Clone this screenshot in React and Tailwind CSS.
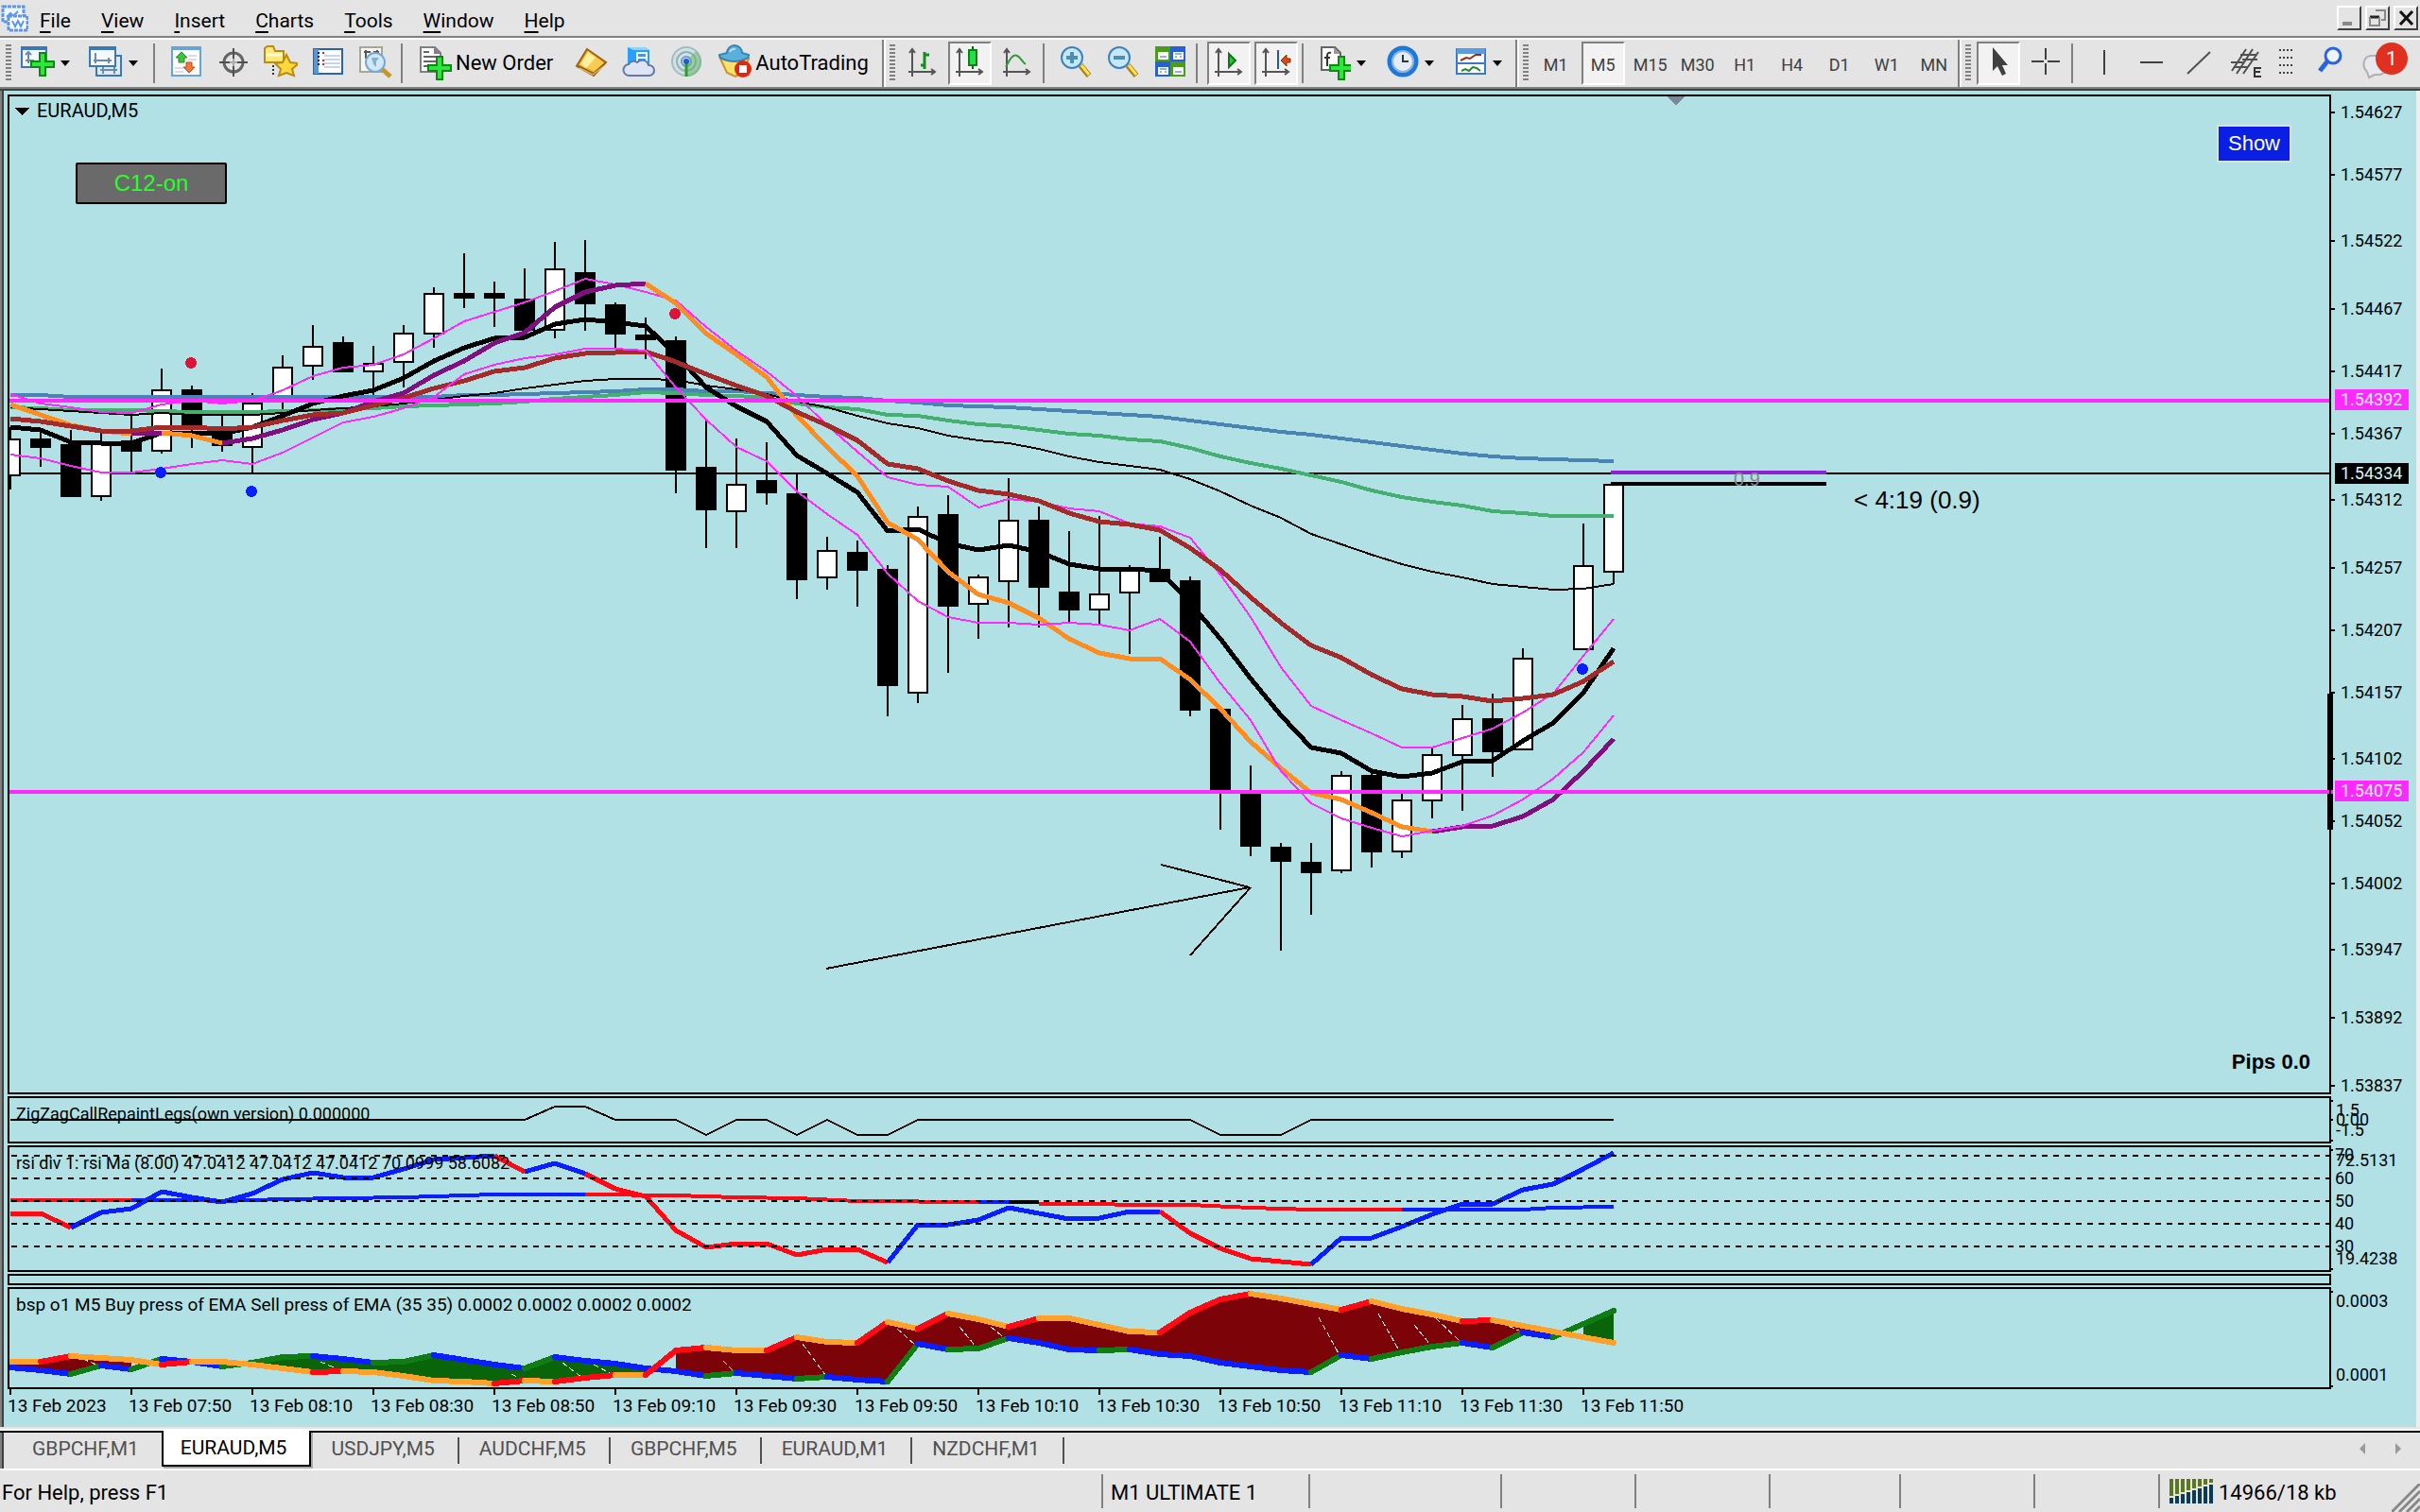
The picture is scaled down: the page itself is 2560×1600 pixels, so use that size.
const STEP = 32;
const FIRST_X = 11;
const barX = (i) => FIRST_X + i * STEP;

// [bar, high, bodyTop, bodyBottom, low, up]
const CANDLES = [
    [0, 452, 464, 504, 518, 1], [1, 455, 464, 474, 494, 0], [2, 455, 470, 526, 526, 0], [3, 457, 468, 526, 530, 1],
    [4, 438, 466, 478, 500, 0], [5, 390, 412, 478, 480, 1], [6, 408, 412, 452, 474, 0], [7, 438, 455, 472, 478, 0],
    [8, 416, 426, 474, 500, 1], [9, 376, 388, 424, 434, 1], [10, 344, 366, 388, 402, 1], [11, 356, 362, 394, 394, 0],
    [12, 366, 384, 394, 418, 1], [13, 344, 352, 384, 410, 1], [14, 304, 310, 354, 368, 1], [15, 268, 310, 316, 326, 0],
    [16, 298, 310, 316, 346, 0], [17, 284, 316, 350, 350, 0], [18, 256, 284, 350, 358, 1], [19, 254, 288, 322, 350, 0],
    [20, 320, 322, 354, 368, 0], [21, 336, 354, 360, 380, 0], [22, 356, 360, 498, 522, 0], [23, 444, 494, 540, 580, 0],
    [24, 464, 512, 542, 580, 1], [25, 468, 508, 522, 534, 0], [26, 502, 522, 614, 634, 0], [27, 568, 582, 612, 624, 1],
    [28, 572, 584, 604, 642, 0], [29, 598, 602, 726, 758, 0], [30, 536, 546, 734, 744, 1], [31, 524, 544, 642, 712, 0],
    [32, 608, 610, 640, 676, 1], [33, 506, 550, 616, 664, 1], [34, 536, 550, 622, 664, 0], [35, 562, 626, 646, 658, 0],
    [36, 546, 628, 646, 660, 1], [37, 598, 602, 628, 692, 1], [38, 568, 602, 616, 616, 0], [39, 610, 614, 752, 758, 0],
    [40, 750, 750, 838, 878, 0], [41, 810, 838, 896, 906, 0], [42, 892, 896, 912, 1006, 0], [43, 892, 912, 924, 968, 0],
    [44, 816, 820, 922, 924, 1], [45, 817, 820, 902, 918, 0], [46, 840, 846, 902, 908, 1], [47, 792, 798, 848, 866, 1],
    [48, 746, 760, 800, 858, 1], [49, 734, 760, 796, 822, 0], [50, 686, 696, 794, 794, 1], [52, 554, 598, 688, 688, 1],
    [53, 512, 512, 606, 618, 1],
];

const MA_BLUE = [
    418, 418, 420, 420, 420, 420, 420, 420, 420, 420, 420, 420, 420, 420, 420, 418, 418, 417, 416, 415,
    414, 412, 412, 414, 414, 416, 418, 420, 421, 424, 426, 429, 430, 431, 433, 435, 437, 439, 441, 445,
    449, 453, 457, 460, 464, 468, 472, 476, 480, 483, 485, 486, 487, 488,
];
const MA_GREEN = [
    431, 432, 434, 434, 434, 435, 436, 436, 436, 435, 434, 433, 432, 430, 429, 428, 427, 425, 422, 420,
    418, 415, 416, 418, 419, 421, 427, 431, 433, 439, 440, 445, 449, 451, 455, 459, 461, 465, 467, 474,
    483, 490, 496, 503, 510, 519, 526, 531, 535, 541, 543, 546, 546, 546,
];
const MA_SLOW = [
    431, 433, 435, 437, 439, 437, 439, 439, 439, 437, 434, 432, 430, 427, 423, 419, 416, 411, 407, 403,
    401, 401, 402, 408, 412, 417, 425, 431, 440, 448, 453, 461, 466, 469, 475, 483, 489, 493, 497, 507,
    520, 535, 548, 565, 576, 587, 597, 605, 611, 618, 621, 624, 623, 618,
];
const MA_BROWN = [
    443, 446, 451, 456, 456, 452, 452, 454, 452, 445, 439, 437, 429, 421, 411, 403, 393, 389, 379, 374,
    373, 372, 383, 396, 408, 419, 436, 450, 466, 491, 496, 509, 519, 523, 530, 543, 552, 555, 561, 580,
    603, 632, 659, 683, 696, 714, 729, 735, 737, 742, 739, 735, 721, 700,
];
const MA_FAST = [
    452, 455, 468, 469, 469, 458, 458, 459, 452, 440, 427, 419, 413, 400, 382, 368, 358, 357, 343, 338,
    341, 345, 375, 410, 430, 446, 482, 501, 521, 562, 560, 575, 582, 577, 584, 597, 602, 602, 604, 638,
    676, 718, 757, 791, 797, 816, 822, 818, 806, 805, 784, 765, 733, 686,
];
const BAND_UPPER = [
    417, 427, 431, 436, 437, 428, 424, 427, 424, 413, 398, 389, 386, 375, 358, 340, 330, 320, 308, 295,
    301, 309, 318, 346, 371, 393, 419, 450, 478, 505, 513, 515, 537, 528, 531, 538, 541, 554, 557, 569,
    608, 653, 706, 747, 762, 776, 791, 791, 781, 771, 754, 734, 694, 655,
];
const BAND_LOWER = [
    481, 485, 493, 500, 500, 496, 491, 487, 491, 479, 463, 447, 441, 432, 420, 396, 386, 379, 375, 369,
    369, 371, 410, 444, 473, 488, 520, 544, 566, 607, 636, 653, 659, 659, 661, 659, 661, 667, 655, 679,
    723, 762, 816, 850, 866, 876, 885, 879, 874, 863, 846, 824, 796, 757,
];

// supertrend: list of [colour, [[bar, y], ...]]
const TREND = [
    ['#ff8c1e', [[0, 428], [1, 439], [2, 450], [3, 456], [4, 459]]],
    ['#800f80', [[4, 459], [5, 458]]],
    ['#ff8c1e', [[5, 458], [6, 461], [7, 469]]],
    ['#800f80', [[7, 469], [8, 464], [9, 455], [10, 444], [11, 437], [12, 425], [13, 416], [14, 397], [15, 382], [16, 363], [17, 352], [18, 325], [19, 309], [20, 302], [21, 300]]],
    ['#ff8c1e', [[21, 300], [22, 321], [23, 353], [24, 375], [25, 399], [26, 440], [27, 473], [28, 504], [29, 553], [30, 571], [31, 605], [32, 629], [33, 638], [34, 654], [35, 676], [36, 691], [37, 697], [38, 697], [39, 719], [40, 750], [41, 785], [42, 813], [43, 839], [44, 846], [45, 860], [46, 875], [47, 880]]],
    ['#800f80', [[47, 880], [48, 875], [49, 874], [50, 864], [51, 846], [52, 816], [53, 782]]],
];

const ZIGZAG = [
    [0, 1185], [17, 1185], [18, 1171], [19, 1171], [20, 1185], [22, 1185], [23, 1201], [24, 1185], [25, 1185], [26, 1201],
    [27, 1185], [28, 1201], [29, 1201], [30, 1185], [39, 1185], [40, 1201], [42, 1201], [43, 1185], [53, 1185],
];

const RSI = [
    1284, 1284, 1299, 1283, 1279, 1261, 1267, 1272, 1263, 1248, 1241, 1246, 1246, 1237, 1227, 1225, 1223, 1240, 1231, 1242,
    1258, 1266, 1302, 1320, 1316, 1316, 1328, 1322, 1322, 1336, 1296, 1296, 1291, 1278, 1284, 1290, 1289, 1282, 1282, 1305,
    1321, 1332, 1335, 1338, 1310, 1310, 1298, 1285, 1274, 1274, 1259, 1253, 1237, 1220,
];
// [from, to, colour] in bars
const RSI_RUNS = [
    [0, 2, '#ff0a14'], [2, 16, '#0a1eff'], [16, 17, '#ff0a14'], [17, 19, '#0a1eff'], [19, 29, '#ff0a14'],
    [29, 38, '#0a1eff'], [38, 43, '#ff0a14'], [43, 53, '#0a1eff'],
];
const RSI_SLOW = [
    ['#ff0a14', [[0, 1270], [4, 1270]]],
    ['#0a1eff', [[4, 1270], [6, 1270]]],
    ['#ff0a14', [[6, 1270], [7, 1271]]],
    ['#0a1eff', [[7, 1271], [9, 1269], [13, 1267], [16, 1264], [19, 1264]]],
    ['#ff0a14', [[19, 1264], [22, 1265], [24, 1267], [26, 1268], [28, 1271], [32, 1272]]],
    ['#0a1eff', [[32, 1272], [33, 1272]]],
    ['#000000', [[33, 1272], [34, 1272]]],
    ['#ff0a14', [[34, 1274], [39, 1275], [41, 1278], [43, 1280], [46, 1280]]],
    ['#0a1eff', [[46, 1280], [50, 1280], [51, 1278], [53, 1277]]],
];
const RSI_LEVELS = [
    { y: 1223, label: '70', text: 1228 },
    { y: 1247, label: '60', text: 1253 },
    { y: 1271, label: '50', text: 1277 },
    { y: 1295, label: '40', text: 1301 },
    { y: 1319, label: '30', text: 1325 },
];

const SELL = [
    1441, 1441, 1435, 1437, 1439, 1444, 1441, 1441, 1444, 1448, 1452, 1451, 1452, 1456, 1461, 1462, 1464, 1461, 1462, 1458,
    1455, 1455, 1429, 1426, 1429, 1429, 1415, 1420, 1421, 1399, 1406, 1390, 1396, 1404, 1395, 1395, 1402, 1409, 1410, 1389,
    1375, 1369, 1374, 1380, 1386, 1377, 1385, 1391, 1398, 1397, 1403, 1409, 1415, 1421,
];
const BUY = [
    1447, 1450, 1454, 1445, 1449, 1438, 1441, 1446, 1442, 1436, 1435, 1438, 1442, 1441, 1434, 1439, 1444, 1448, 1436, 1440,
    1443, 1448, 1451, 1456, 1453, 1456, 1459, 1457, 1460, 1462, 1422, 1428, 1427, 1416, 1421, 1428, 1429, 1428, 1433, 1435,
    1442, 1446, 1450, 1452, 1434, 1438, 1431, 1425, 1421, 1426, 1410, 1415, 1401, 1387,
];
const HATCH = [
    [88, 1438, 104, 1445], [339, 1441, 360, 1450], [541, 1454, 551, 1459], [595, 1442, 615, 1457], [628, 1444, 647, 1454],
    [765, 1440, 777, 1452], [849, 1422, 873, 1455], [949, 1406, 968, 1423], [1015, 1404, 1033, 1426], [1048, 1404, 1064, 1417],
    [1395, 1394, 1417, 1434], [1458, 1390, 1480, 1429], [1496, 1402, 1514, 1424], [1519, 1395, 1546, 1421], [1588, 1400, 1609, 1409],
];

const PRICES = [
    ['1.54627', 119], ['1.54577', 185], ['1.54522', 255], ['1.54467', 327], ['1.54417', 393], ['1.54367', 459],
    ['1.54312', 529], ['1.54257', 601], ['1.54207', 667], ['1.54157', 733], ['1.54102', 803], ['1.54052', 869],
    ['1.54002', 935], ['1.53947', 1005], ['1.53892', 1077], ['1.53837', 1149],
];
const PRICE_TAGS = [
    ['1.54392', 423, '#ff28ff'], ['1.54334', 501, '#000000'], ['1.54075', 837, '#ff28ff'],
];
const TIMES = ['2023', '07:50', '08:10', '08:30', '08:50', '09:10', '09:30', '09:50', '10:10', '10:30', '10:50', '11:10', '11:30', '11:50'];

const MENUS = ['File', 'View', 'Insert', 'Charts', 'Tools', 'Window', 'Help'];
const TIMEFRAMES = ['M1', 'M5', 'M15', 'M30', 'H1', 'H4', 'D1', 'W1', 'MN'];
const TABS = ['GBPCHF,M1', 'EURAUD,M5', 'USDJPY,M5', 'AUDCHF,M5', 'GBPCHF,M5', 'EURAUD,M1', 'NZDCHF,M1'];

const toPoints = (ys) => ys.map((y, i) => `${barX(i)},${y}`).join(' ');
const pairPoints = (pairs) => pairs.map(([i, y]) => `${barX(i)},${y}`).join(' ');

const Line = ({ points, color, width }) => (
    <polyline points={points} fill="none" stroke={color} strokeWidth={width} strokeLinejoin="round" />
);

/* ---------- toolbar icons, all on a 36 x 40 box ---------- */

const Icon = ({ children }) => (
    <svg viewBox="0 0 36 40" className="w-9 h-10 shrink-0" fill="none" aria-hidden="true">{children}</svg>
);

const Plus = ({ x, y }) => (
    <path d={`M${x + 8} ${y}h6v9h9v6h-9v9h-6v-9h-9v-6h9z`} fill="#2fe63c" stroke="#0a8a14" strokeWidth="2" />
);

const NewChartIcon = () => (
    <Icon>
        <rect x="1" y="3" width="26" height="21" fill="#f4f8fc" stroke="#3a78b8" strokeWidth="2" />
        <rect x="1" y="2" width="26" height="4" fill="#3a78b8" />
        <path d="M8 8v12M5 11l3-3 3 3M5 17h9" stroke="#6a8cab" strokeWidth="2" />
        <Plus x={12} y={9} />
    </Icon>
);

const ProfilesIcon = () => (
    <Icon>
        <rect x="8" y="12" width="26" height="21" fill="#dfeaf5" stroke="#3a78b8" strokeWidth="2" />
        <path d="M12 27h18M15 23v8M27 23v8" stroke="#6a8cab" strokeWidth="2" />
        <rect x="1" y="3" width="27" height="20" fill="#f4f8fc" stroke="#3a78b8" strokeWidth="2" />
        <rect x="1" y="2" width="27" height="4" fill="#3a78b8" />
        <path d="M7 9v11M5 17h19M21 14v6" stroke="#6a8cab" strokeWidth="2" />
    </Icon>
);

const MarketWatchIcon = () => (
    <Icon>
        <rect x="3" y="3" width="30" height="30" fill="#fff" stroke="#68a4dc" strokeWidth="2" />
        <rect x="3" y="2" width="30" height="4" fill="#68a4dc" />
        <path d="M20 12h9M20 16h9M6 25h9M6 29h9" stroke="#ddd" strokeWidth="2" />
        <path d="M13 8l6 6h-3v5h-6v-5H7z" fill="#3cc43c" stroke="#1e8c1e" />
        <path d="M21 30l6-6h-3v-5h-6v5h-3z" fill="#f07840" stroke="#c04818" />
    </Icon>
);

const CrossCircleIcon = () => (
    <Icon>
        <circle cx="18" cy="19" r="10" stroke="#646464" strokeWidth="3" />
        <path d="M18 4v11M18 23v11M3 19h11M22 19h11" stroke="#505050" strokeWidth="2" />
        <path d="M14 19h8M18 15v8" stroke="#aaa" strokeWidth="2" />
    </Icon>
);

const NavigatorIcon = () => (
    <Icon>
        <path d="M10 22v12" stroke="#333" strokeWidth="2" strokeDasharray="2 2" />
        <path d="M1 4l3-2h6l2 5h9v12H1z" fill="#ffe878" stroke="#b88c14" strokeWidth="2" />
        <path d="M3 11h17" stroke="#fffbd0" strokeWidth="3" />
        <path d="M24 11l4 8 9 1-7 6 2 7-8-3-8 3 2-7-6-6 8-1z" fill="#ffd83c" stroke="#b88c14" strokeWidth="2" />
    </Icon>
);

const DataWindowIcon = () => (
    <Icon>
        <rect x="3" y="5" width="30" height="26" fill="#fff" stroke="#2864b4" strokeWidth="2" />
        <rect x="3" y="5" width="5" height="26" fill="#5a94d8" />
        <path d="M14 12h17M14 16h17M14 20h17M14 24h17" stroke="#c4d4f4" strokeWidth="2" />
        <path d="M8 8v16M13 8v2M13 20v2" stroke="#222" strokeWidth="2" strokeDasharray="2 2" />
        <path d="M13 8v2M13 16v2M13 20v2" stroke="#e01e1e" strokeWidth="2" />
    </Icon>
);

const TesterIcon = () => (
    <Icon>
        <rect x="2" y="3" width="23" height="26" fill="#f6f6f2" stroke="#aaa694" strokeWidth="2" />
        <path d="M8 6v9M6 8h7M20 6v9M16 8h6" stroke="#555" strokeWidth="2" />
        <path d="M25 26l9 8" stroke="#c89628" strokeWidth="5" />
        <circle cx="18" cy="19" r="10" fill="#cfe8fa" stroke="#78a8d4" strokeWidth="2" />
        <path d="M14 14h8l-3 4v6l-3-3z" fill="#8cb0cc" />
    </Icon>
);

const NewOrderIcon = () => (
    <Icon>
        <path d="M3 3h15l6 6v20H3z" fill="#fff" stroke="#808080" strokeWidth="2" />
        <path d="M17 3v7h7z" fill="#808080" />
        <path d="M6 8h6M6 13h14M6 18h14M6 23h10" stroke="#646464" strokeWidth="2" />
        <Plus x={12} y={13} />
    </Icon>
);

const BookIcon = () => (
    <Icon>
        <path d="M13 5l20 14-13 14-18-10z" fill="#f0b432" stroke="#a06414" strokeWidth="2" />
        <path d="M14 7l17 13-11 8-14-7z" fill="#f8cc50" />
        <path d="M14 8l8 6-10 11-6-4z" fill="#fff0a0" />
        <path d="M2 22l18 9 13-12" stroke="#a06414" strokeWidth="2" />
        <path d="M5 25l14 7 12-9" stroke="#e8d8a8" strokeWidth="1" />
    </Icon>
);

const CloudIcon = () => (
    <Icon>
        <path d="M6 3h18l5 3v17H6z" fill="#28a0fa" />
        <path d="M6 3h18l5 3h-17z" fill="#8cd4ff" />
        <path d="M16 9h10v10H16zM16 14h10" stroke="#fff" strokeWidth="2" />
        <path d="M8 33a6 6 0 0 1-1-12 6 6 0 0 1 9-2 7 7 0 0 1 12 3 5 5 0 0 1 1 11z" fill="#dde4f4" stroke="#6478a8" strokeWidth="2" />
    </Icon>
);

const SignalIcon = () => (
    <Icon>
        <circle cx="18" cy="18" r="15" fill="#d4e2dc" stroke="#a0bcc4" strokeWidth="2" />
        <circle cx="18" cy="18" r="10" stroke="#8cb0cc" strokeWidth="2" />
        <circle cx="18" cy="18" r="5" stroke="#6c98d8" strokeWidth="2" />
        <path d="M18 18L28 7a15 15 0 0 1-10 27z" fill="#64b464" fillOpacity="0.5" />
        <path d="M18 18v16" stroke="#28a028" strokeWidth="3" />
        <circle cx="18" cy="18" r="3" fill="#1e5ad2" />
    </Icon>
);

const RobotIcon = () => (
    <Icon>
        <path d="M3 15h30l-6 15-8 4-9-4z" fill="#ffe06c" stroke="#c89628" strokeWidth="2" />
        <path d="M10 9a8 8 0 0 1 16 0l7 2c1 4-8 7-15 7S1 15 2 11z" fill="#5ab0dc" stroke="#3884b4" strokeWidth="2" />
        <path d="M13 8a5 5 0 0 1 6-3" stroke="#b4e0f4" strokeWidth="2" />
        <circle cx="27" cy="26" r="9" fill="#dc2814" />
        <rect x="23" y="22" width="8" height="8" fill="#fff" />
    </Icon>
);

const Axes = () => (
    <path d="M7 6v28M3 29h27M4 9l3-4 3 4M27 26l4 3-4 3" stroke="#555" strokeWidth="2" />
);

const BarsIcon = () => (
    <Icon><Axes /><path d="M20 8v18M16 22h4M20 11h5" stroke="#148c1e" strokeWidth="3" /></Icon>
);
const CandlesIcon = () => (
    <Icon>
        <Axes />
        <path d="M21 2v24" stroke="#0a6414" strokeWidth="2" />
        <rect x="17" y="6" width="8" height="16" fill="#28dc46" stroke="#0a8214" strokeWidth="2" />
    </Icon>
);
const LineIcon = () => (
    <Icon><Axes /><path d="M6 24c5-10 8-14 12-12s5 6 9 9" stroke="#3c963c" strokeWidth="2" /></Icon>
);

const Magnifier = ({ minus }) => (
    <Icon>
        <path d="M23 22l9 11" stroke="#a8841e" strokeWidth="6" />
        <path d="M24 22l8 10" stroke="#ffe050" strokeWidth="3" />
        <circle cx="14" cy="14" r="11" fill="#c8e8fa" stroke="#3c82be" strokeWidth="2" />
        <path d={minus ? 'M8 14h12' : 'M8 14h12M14 8v12'} stroke="#4a90b4" strokeWidth="4" />
    </Icon>
);

const TileIcon = () => (
    <Icon>
        <rect x="2" y="2" width="16" height="16" fill="#4a9c1e" />
        <rect x="18" y="2" width="16" height="16" fill="#2860d2" />
        <rect x="2" y="18" width="16" height="16" fill="#2860d2" />
        <rect x="18" y="18" width="16" height="16" fill="#4a9c1e" />
        <path d="M5 8h11v8H5zM21 8h11v8H21zM5 24h11v8H5zM21 24h11v8H21z" fill="#fff" />
        <path d="M7 13h7M23 13h2M28 13h2M7 29h2M12 29h2M23 29h7M23 10h7M7 26h7" stroke="#8ab4d8" strokeWidth="2" />
    </Icon>
);

const AutoScrollIcon = () => (
    <Icon><Axes /><path d="M18 10v14l7-7z" fill="#28c83c" stroke="#0a7814" strokeWidth="2" /></Icon>
);
const ShiftIcon = () => (
    <Icon>
        <Axes />
        <path d="M20 6v20" stroke="#1e5aa0" strokeWidth="2" />
        <path d="M23 17l6-6v4h4v4h-4v4z" fill="#d2501e" stroke="#8c2800" />
    </Icon>
);

const IndicatorsIcon = () => (
    <Icon>
        <path d="M5 3h14l6 6v18H5z" fill="#fff" stroke="#646464" strokeWidth="2" />
        <path d="M18 3v7h7z" fill="#999" />
        <path d="M15 9c-3-1-4 1-4 3v11M8 14h6" stroke="#333" strokeWidth="2" />
        <Plus x={15} y={13} />
    </Icon>
);
const ClockIcon = () => (
    <Icon>
        <circle cx="19" cy="18" r="14" fill="#e4ecf6" stroke="#1e78dc" strokeWidth="5" />
        <circle cx="19" cy="18" r="11" stroke="#8cb4dc" strokeWidth="2" />
        <path d="M19 11v7h6" stroke="#333" strokeWidth="2" />
    </Icon>
);
const TemplateIcon = () => (
    <Icon>
        <rect x="4" y="5" width="30" height="26" fill="#fff" stroke="#3a78c8" strokeWidth="2" />
        <rect x="4" y="4" width="30" height="6" fill="#5a9ce0" />
        <path d="M4 20h30" stroke="#3a78c8" strokeWidth="2" />
        <path d="M8 17l6-3 4 1 6-4h6" stroke="#a02814" strokeWidth="2" />
        <path d="M9 28l4-2 4 2 4-4 4 1 4 3" stroke="#1e8c28" strokeWidth="2" />
    </Icon>
);

const CursorIcon = () => (
    <Icon><path d="M12 3v25l5-5 5 10 4-2-4-9h6z" fill="#404040" /></Icon>
);
const CrosshairIcon = () => (
    <Icon><path d="M18 4v12M18 20v12M3 18h13M20 18h13" stroke="#404040" strokeWidth="2" /></Icon>
);
const VLineIcon = () => (
    <Icon><path d="M18 6v26" stroke="#404040" strokeWidth="2" /></Icon>
);
const HLineIcon = () => (
    <Icon><path d="M6 19h24" stroke="#404040" strokeWidth="2" /></Icon>
);
const TrendIcon = () => (
    <Icon><path d="M6 31L30 8" stroke="#505050" strokeWidth="2" /></Icon>
);
const ChannelIcon = () => (
    <Icon>
        <path d="M3 28L18 5M8 31L25 5M15 31L31 8M2 19h14M6 24h14M12 11h16M14 16h16" stroke="#505050" strokeWidth="2" />
        <path d="M34 25h-7v9h7M27 29h6" stroke="#333" strokeWidth="2" />
    </Icon>
);
const SearchIcon = () => (
    <Icon>
        <path d="M15 18L7 28" stroke="#2864dc" strokeWidth="5" />
        <circle cx="21" cy="12" r="8" fill="#eef4fc" stroke="#2864dc" strokeWidth="3" />
    </Icon>
);

/* ---------- toolbar parts ---------- */

const Grip = () => (
    <div className="w-1.5 h-10 mr-0.5 bg-[repeating-linear-gradient(#808080_0_2px,transparent_2px_4px)]" />
);
const Sep = () => <div className="w-0.5 h-[42px] mr-1.5 bg-[#808080]" />;

const ToolButton = ({ label, pressed, children }) => (
    <button
        aria-label={label}
        className={
            pressed
                ? 'w-[46px] h-[46px] flex items-center justify-center shrink-0 border-2 border-t-[#808080] border-l-[#808080] border-b-white border-r-white bg-[#f2f2f2]'
                : 'w-[46px] h-[46px] flex items-center justify-center shrink-0'
        }
    >
        {children}
    </button>
);

const DropButton = ({ label, children }) => (
    <button aria-label={label} className="w-[68px] h-[46px] flex items-center gap-1.5 pl-1 shrink-0">
        {children}
        <svg viewBox="0 0 10 6" className="w-2.5 h-1.5" aria-hidden="true"><path d="M0 0h10L5 6z" /></svg>
    </button>
);

const TextButton = ({ icon, children }) => (
    <button className="h-[46px] flex items-center gap-1 pl-1.5 pr-3.5 shrink-0 text-[22px] leading-6 whitespace-nowrap">
        {icon}
        {children}
    </button>
);

const MenuBar = () => (
    <div className="h-[38px] flex items-center">
        <svg viewBox="0 0 30 30" className="w-[30px] h-[30px] shrink-0" fill="none" aria-hidden="true">
            <rect x="3" y="3" width="22" height="16" fill="#eef6ff" stroke="#5a96f0" strokeWidth="3" strokeDasharray="4 1" />
            <path d="M7 14l4-4 3 3 5-5" stroke="#5a96f0" strokeWidth="2" />
            <rect x="9" y="13" width="20" height="15" fill="#fff" stroke="#5a96f0" strokeWidth="3" strokeDasharray="4 1" />
            <path d="M13 18l3 6 3-6 3 6 3-6" stroke="#5a96f0" strokeWidth="2" />
        </svg>
        <nav className="flex flex-1 -ml-1">
            {MENUS.map((name) => (
                <button key={name} className="px-4 text-[21px] leading-6 pt-1.5">
                    <span className="underline underline-offset-4 decoration-2">{name[0]}</span>{name.slice(1)}
                </button>
            ))}
        </nav>
        <div className="flex gap-1 pr-0.5">
            <WindowButton label="Minimize"><path d="M4 17h10" stroke="#888" strokeWidth="4" /></WindowButton>
            <WindowButton label="Restore">
                <path d="M9 3h10v10h-4" stroke="#888" strokeWidth="2" />
                <path d="M3 10h10" stroke="#222" strokeWidth="3" />
                <path d="M3 10v9h10v-9" stroke="#888" strokeWidth="2" />
            </WindowButton>
            <WindowButton label="Close"><path d="M5 4l13 14M18 4L5 18" stroke="#111" strokeWidth="3" /></WindowButton>
        </div>
    </div>
);

const WindowButton = ({ label, children }) => (
    <button aria-label={label} className="w-[26px] h-[26px] border-2 border-t-white border-l-white border-b-[#404040] border-r-[#404040]">
        <svg viewBox="0 0 22 22" className="w-full h-full" fill="none" aria-hidden="true">{children}</svg>
    </button>
);

const Toolbar = () => (
    <div className="h-[50px] flex">
        <div className="flex items-center gap-1 pl-1.5 border-r-2 border-[#808080]">
            <Grip />
            <DropButton label="New chart"><NewChartIcon /></DropButton>
            <DropButton label="Profiles"><ProfilesIcon /></DropButton>
            <Sep />
            <ToolButton label="Market Watch"><MarketWatchIcon /></ToolButton>
            <ToolButton label="Center"><CrossCircleIcon /></ToolButton>
            <ToolButton label="Navigator"><NavigatorIcon /></ToolButton>
            <ToolButton label="Data Window"><DataWindowIcon /></ToolButton>
            <ToolButton label="Strategy Tester"><TesterIcon /></ToolButton>
            <Sep />
            <TextButton icon={<NewOrderIcon />}>New Order</TextButton>
            <ToolButton label="Book"><BookIcon /></ToolButton>
            <ToolButton label="Hosting"><CloudIcon /></ToolButton>
            <ToolButton label="Signals"><SignalIcon /></ToolButton>
            <TextButton icon={<RobotIcon />}>AutoTrading</TextButton>
        </div>
        <div className="flex items-center gap-1 pl-1 pr-0.5 border-l-2 border-l-white border-r-2 border-r-[#808080]">
            <Grip />
            <ToolButton label="Bar chart"><BarsIcon /></ToolButton>
            <ToolButton label="Candlesticks" pressed><CandlesIcon /></ToolButton>
            <ToolButton label="Line chart"><LineIcon /></ToolButton>
            <Sep />
            <ToolButton label="Zoom in"><Magnifier /></ToolButton>
            <ToolButton label="Zoom out"><Magnifier minus /></ToolButton>
            <ToolButton label="Tile windows"><TileIcon /></ToolButton>
            <Sep />
            <ToolButton label="Auto scroll" pressed><AutoScrollIcon /></ToolButton>
            <ToolButton label="Chart shift" pressed><ShiftIcon /></ToolButton>
            <Sep />
            <DropButton label="Indicators"><IndicatorsIcon /></DropButton>
            <DropButton label="Periods"><ClockIcon /></DropButton>
            <DropButton label="Templates"><TemplateIcon /></DropButton>
        </div>
        <div className="flex items-center gap-1 pl-1 pr-0.5 border-l-2 border-l-white border-r-2 border-r-[#808080]">
            <Grip />
            {TIMEFRAMES.map((tf) => (
                <ToolButton key={tf} label={tf} pressed={tf === 'M5'}>
                    <span className="text-[18px] leading-6 pt-1 text-[#404040]">{tf}</span>
                </ToolButton>
            ))}
        </div>
        <div className="flex flex-1 items-center gap-1 pl-1 border-l-2 border-l-white">
            <Grip />
            <ToolButton label="Cursor" pressed><CursorIcon /></ToolButton>
            <ToolButton label="Crosshair"><CrosshairIcon /></ToolButton>
            <Sep />
            <ToolButton label="Vertical line"><VLineIcon /></ToolButton>
            <ToolButton label="Horizontal line"><HLineIcon /></ToolButton>
            <ToolButton label="Trendline"><TrendIcon /></ToolButton>
            <ToolButton label="Equidistant channel"><ChannelIcon /></ToolButton>
            <svg viewBox="0 0 14 26" className="w-3.5 h-[26px] ml-2 mb-1" aria-hidden="true">
                <path d="M0 1h14M0 9h14M0 17h14M0 25h14" stroke="#404040" strokeWidth="2" strokeDasharray="2 2" />
            </svg>
            <div className="flex flex-1 justify-end items-center gap-2.5 pr-3">
                <ToolButton label="Search"><SearchIcon /></ToolButton>
                <button className="relative w-[50px] h-[46px]" aria-label="Notifications">
                    <svg viewBox="0 0 50 46" className="w-full h-full" aria-hidden="true">
                        <path d="M8 38l-2-6C0 26 2 16 10 15h10c8 1 12 16 0 20h-6z" fill="#e8e8ee" stroke="#b0b0b4" strokeWidth="2" />
                        <circle cx="32" cy="18" r="17" fill="#e03020" />
                        <text x="32" y="25" textAnchor="middle" fontSize="21" fill="#fff">1</text>
                    </svg>
                </button>
            </div>
        </div>
    </div>
);

/* ---------- chart ---------- */

const PricePlot = () => (
    <svg className="flex-1 min-w-0" shapeRendering="crispEdges">
        <g transform="translate(-10 -102)">
            <rect x="10" y="500" width="100%" height="2" />
            {CANDLES.map(([i, high, top, bottom, low, up]) => (
                <g key={i}>
                    <rect x={barX(i) - 1} y={high} width="2" height={low - high} />
                    <rect x={barX(i) - 11} y={top} width="22" height={bottom - top} />
                    {up === 1 && <rect x={barX(i) - 9} y={top + 2} width="18" height={bottom - top - 4} fill="#fff" />}
                </g>
            ))}
            <Line points={toPoints(MA_BLUE)} color="#4a84b4" width="4" />
            <Line points={toPoints(MA_GREEN)} color="#44b070" width="4" />
            <Line points={toPoints(MA_SLOW)} color="#000" width="2" />
            <Line points={toPoints(MA_FAST)} color="#000" width="5" />
            <Line points={toPoints(BAND_UPPER)} color="#ff28ff" width="2" />
            {TREND.map(([color, pairs], n) => (
                <Line key={n} points={pairPoints(pairs)} color={color} width="5" />
            ))}
            <Line points={toPoints(MA_BROWN)} color="#a52a2a" width="5" />
            <Line points={toPoints(BAND_LOWER)} color="#ff28ff" width="2" />
            <rect x="10" y="422" width="100%" height="4" fill="#ff28ff" />
            <rect x="10" y="836" width="100%" height="4" fill="#ff28ff" />
            <rect x="1704" y="498" width="228" height="4" fill="#9020d4" />
            <rect x="1704" y="510" width="228" height="4" />
            <circle cx="202" cy="384" r="6" fill="#dc143c" />
            <circle cx="714" cy="332" r="6" fill="#dc143c" />
            <circle cx="170" cy="500" r="6" fill="#0a1eff" />
            <circle cx="266" cy="520" r="6" fill="#0a1eff" />
            <circle cx="1674" cy="708" r="6" fill="#0a1eff" />
            <path d="M874 1025L1322 939M1228 915l94 24M1259 1011l64-72" stroke="#000" strokeWidth="2" />
            <path d="M1764 102h18l-9 10z" fill="#778899" />
            <path d="M15 114h16l-8 8z" />
            <text x="39" y="124" fontSize="20">EURAUD,M5</text>
            <text x="1834" y="514" fontSize="20" fill="#888" className="font-['Liberation_Sans',sans-serif]">0.9</text>
            <text x="1961" y="538" fontSize="26" className="font-['Liberation_Sans',sans-serif]">{'< 4:19 (0.9)'}</text>
        </g>
    </svg>
);

const PriceAxis = () => (
    <svg className="w-[90px] h-auto shrink-0 overflow-visible" fontSize="18">
        <g transform="translate(-2466 -100)">
            <rect x="2462" y="734" width="6" height="144" />
            <rect x="2464" y="422" width="2" height="4" fill="#ff28ff" />
            <rect x="2462" y="836" width="6" height="4" fill="#ff28ff" />
            {PRICES.map(([price, y]) => (
                <g key={price}>
                    <rect x="2466" y={y - 1} width="4" height="2" />
                    <text x="2476" y={y + 6}>{price}</text>
                </g>
            ))}
            {PRICE_TAGS.map(([price, y, color]) => (
                <g key={price}>
                    <rect x="2470" y={y - 11} width="78" height="22" fill={color} />
                    <text x="2476" y={y + 6} fill="#d8f4f6">{price}</text>
                </g>
            ))}
        </g>
    </svg>
);

const ZigZagPanel = () => (
    <div className="h-[50px] flex">
        <div className="flex flex-1 min-w-0 border-2 border-black">
            <svg className="flex-1 min-w-0" shapeRendering="crispEdges">
                <g transform="translate(-10 -1162)">
                    <text x="17" y="1185" fontSize="18">ZigZagCallRepaintLegs(own version) 0.000000</text>
                    <Line points={pairPoints(ZIGZAG)} color="#000" width="2" />
                </g>
            </svg>
        </div>
        <svg className="w-[90px] shrink-0 overflow-visible" fontSize="18">
            <g transform="translate(-2466 -1160)">
                <path d="M2466 1165h2M2466 1185h2M2466 1207h2" stroke="#000" strokeWidth="2" />
                <text x="2471" y="1181">1.5</text>
                <text x="2471" y="1191">0.00</text>
                <text x="2471" y="1202">-1.5</text>
            </g>
        </svg>
    </div>
);

const RsiPanel = () => (
    <div className="h-[134px] flex">
        <div className="flex flex-1 min-w-0 border-2 border-black">
            <svg className="flex-1 min-w-0" shapeRendering="crispEdges">
                <g transform="translate(-10 -1214)">
                    {RSI_SLOW.map(([color, pairs], n) => (
                        <Line key={n} points={pairPoints(pairs)} color={color} width="4" />
                    ))}
                    {RSI_RUNS.map(([from, to, color]) => (
                        <Line
                            key={from}
                            points={pairPoints(RSI.map((y, i) => [i, y]).slice(from, to + 1))}
                            color={color}
                            width="5"
                        />
                    ))}
                    {RSI_LEVELS.map(({ y, label }) => (
                        <path key={label} d={`M12 ${y}h4000`} stroke="#000" strokeWidth="2" strokeDasharray="6 6" />
                    ))}
                    <text x="17" y="1237" fontSize="18">rsi div 1: rsi Ma (8.00) 47.0412 47.0412 47.0412 70.0999 58.6082</text>
                </g>
            </svg>
        </div>
        <svg className="w-[90px] shrink-0 overflow-visible" fontSize="18">
            <g transform="translate(-2466 -1212)">
                <path d="M2466 1217h2M2466 1343h2" stroke="#000" strokeWidth="2" />
                {RSI_LEVELS.map(({ label, text }) => (
                    <text key={label} x="2470" y={text}>{label}</text>
                ))}
                <text x="2471" y="1234">72.5131</text>
                <text x="2471" y="1338">19.4238</text>
            </g>
        </svg>
    </div>
);

const PressureFill = () => (
    SELL.slice(0, -1).map((_, i) => {
        const red = SELL[i] < BUY[i];
        if (red !== SELL[i + 1] < BUY[i + 1]) return null;
        const a = barX(i);
        const b = barX(i + 1);
        return (
            <path
                key={i}
                d={`M${a} ${SELL[i]}L${b} ${SELL[i + 1]}V${BUY[i + 1]}L${a} ${BUY[i]}z`}
                fill={red ? '#7c0408' : '#0a640a'}
            />
        );
    })
);

const PressureLine = ({ series, rising, falling }) => (
    series.slice(1).map((y, i) => (
        <path
            key={i}
            d={`M${barX(i)} ${series[i]}L${barX(i + 1)} ${y}`}
            stroke={y < series[i] ? rising : falling}
            strokeWidth="6"
            strokeLinecap="round"
        />
    ))
);

const PressurePanel = () => (
    <div className="h-[108px] flex">
        <div className="flex flex-1 min-w-0 border-2 border-black">
            <svg className="flex-1 min-w-0" shapeRendering="crispEdges">
                <g transform="translate(-10 -1364)">
                    <PressureFill />
                    {HATCH.map(([x1, y1, x2, y2]) => (
                        <line key={x1} x1={x1} y1={y1} x2={x2} y2={y2} stroke="#dcf0f0" strokeWidth="1" strokeDasharray="6 3" />
                    ))}
                    <PressureLine series={BUY} rising="#0f7d14" falling="#0a1eff" />
                    <PressureLine series={SELL} rising="#ff0a14" falling="#ffa028" />
                    <text x="17" y="1387" fontSize="19">
                        bsp o1 M5 Buy press of EMA Sell press of EMA (35 35) 0.0002 0.0002 0.0002 0.0002
                    </text>
                </g>
            </svg>
        </div>
        <svg className="w-[90px] shrink-0 overflow-visible" fontSize="18">
            <g transform="translate(-2466 -1362)">
                <path d="M2466 1367h2M2466 1467h2" stroke="#000" strokeWidth="2" />
                <text x="2471" y="1383">0.0003</text>
                <text x="2471" y="1461">0.0001</text>
            </g>
        </svg>
    </div>
);

const TimeAxis = () => (
    <svg className="h-10 w-full overflow-visible" fontSize="19">
        <g transform="translate(-8 -1470)">
            {TIMES.map((time, n) => (
                <g key={time}>
                    <rect x={barX(n * 4) - 1} y="1470" width="2" height="6" />
                    <text x={barX(n * 4) - 3} y="1494">13 Feb {time}</text>
                </g>
            ))}
        </g>
    </svg>
);

const Chart = () => (
    <main className="flex flex-1 min-h-0 flex-col bg-[#b1e1e5] pl-1 pt-1 border-l-2 border-l-[#404040] border-r-4 border-r-[#eeeeee]">
        <div className="flex flex-col flex-1 min-h-0 gap-0.5">
            <div className="flex flex-1 min-h-0">
                <div className="relative flex flex-1 min-w-0 border-2 border-black">
                    <PricePlot />
                    <button className="absolute left-[70px] top-[70px] w-40 h-11 border-2 border-black rounded-xs bg-[#6a6a6a] text-[#28ff28] text-2xl font-['Liberation_Sans',sans-serif]">
                        C12-on
                    </button>
                    <button className="absolute right-10 top-[30px] w-[79px] h-10 border-2 border-[#d8e0e4] bg-[#0a1ee6] text-white text-[22px] leading-6 font-['Liberation_Sans',sans-serif]">
                        Show
                    </button>
                    <span className="absolute right-5 bottom-5 text-[22px] leading-6 font-bold font-['Liberation_Sans',sans-serif]">
                        Pips 0.0
                    </span>
                </div>
                <PriceAxis />
            </div>
            <ZigZagPanel />
            <RsiPanel />
            <div className="h-3 mr-[90px] border-2 border-black" />
            <PressurePanel />
        </div>
        <TimeAxis />
    </main>
);

/* ---------- bottom ---------- */

const ChartTabs = () => (
    <div className="h-[42px] flex items-start bg-[#e4e4e4] border-t-2 border-white">
        <div className="flex flex-1 h-10 border-t-2 border-black">
            <div className="w-1 border-l-2 border-r-2 border-l-[#808080] border-r-[#404040]" />
            {TABS.map((tab, i) => {
                if (i === 0) {
                    return <button key={tab} className="pl-[30px] pr-6 pb-1 text-[21px] leading-6 text-[#505050]">{tab}</button>;
                }
                if (i === 1) {
                    return (
                        <button key={tab} className="pl-[18px] pr-6 h-[38px] -mt-0.5 border-2 border-t-0 border-black bg-white shadow-[2px_2px_0_#aaa] text-[21px] leading-6">
                            {tab}
                        </button>
                    );
                }
                return (
                    <div key={tab} className="flex items-center">
                        <button className="pl-[21px] pr-6 pb-1 text-[21px] leading-6 text-[#505050]">{tab}</button>
                        <div className="w-0.5 h-7 bg-[#505050]" />
                    </div>
                );
            })}
            <div className="flex flex-1 items-center justify-end gap-8 pr-5 pb-1">
                <button aria-label="Scroll left">
                    <svg viewBox="0 0 6 12" className="w-1.5 h-3" aria-hidden="true"><path d="M6 0v12L0 6z" fill="#999" /></svg>
                </button>
                <button aria-label="Scroll right">
                    <svg viewBox="0 0 6 12" className="w-1.5 h-3" aria-hidden="true"><path d="M0 0v12l6-6z" fill="#999" /></svg>
                </button>
            </div>
        </div>
    </div>
);

const StatusBar = () => (
    <footer className="h-[46px] flex items-center bg-[#e4e4e4] border-t-2 border-white text-[22px] leading-6">
        <div className="flex-1 h-9 pl-0.5 pt-2">For Help, press F1</div>
        <div className="w-[219px] h-9 pl-2 pt-2 border-l-2 border-[#808080]">M1 ULTIMATE 1</div>
        <div className="w-[203px] h-9 border-l-2 border-[#808080]" />
        <div className="w-[142px] h-9 border-l-2 border-[#808080]" />
        <div className="w-[142px] h-9 border-l-2 border-[#808080]" />
        <div className="w-[138px] h-9 border-l-2 border-[#808080]" />
        <div className="w-[142px] h-9 border-l-2 border-[#808080]" />
        <div className="w-[132px] h-9 border-l-2 border-[#808080]" />
        <div className="w-[277px] h-11 flex items-center">
            <div className="flex flex-1 h-9 items-center gap-1.5 pl-2.5 border-l-2 border-[#808080]">
                <svg viewBox="0 0 46 26" className="w-[46px] h-[26px]" aria-hidden="true">
                    {[0, 1, 2, 3, 4, 5, 6, 7].map((n) => (
                        <g key={n}>
                            <rect x={n * 6} y="0" width="4" height={18 - n * 2} fill="#5c781e" />
                            <rect x={n * 6} y={20 - n * 2} width="4" height={6 + n * 2} fill="#0a3c5a" />
                        </g>
                    ))}
                </svg>
                <span className="pt-1">14966/18 kb</span>
            </div>
            <svg viewBox="0 0 30 30" className="w-[30px] h-[30px] self-end" aria-hidden="true">
                <path d="M0 30L30 0M8 30L30 8M16 30l14-14M24 30l6-6" stroke="#888" strokeWidth="3" />
            </svg>
        </div>
    </footer>
);

export default function App() {
    return (
        <div className="h-screen flex flex-col bg-[#e4e4e4] text-black font-[Roboto,sans-serif]">
            <MenuBar />
            <div className="border-t-2 border-[#808080]" />
            <div className="border-t-2 border-white" />
            <Toolbar />
            <div className="h-0.5 bg-[#808080]" />
            <div className="h-0.5 bg-[#404040]" />
            <div className="flex flex-1 min-h-0 border-l-2 border-[#808080]">
                <Chart />
            </div>
            <div className="h-0.5" />
            <ChartTabs />
            <StatusBar />
        </div>
    );
}
